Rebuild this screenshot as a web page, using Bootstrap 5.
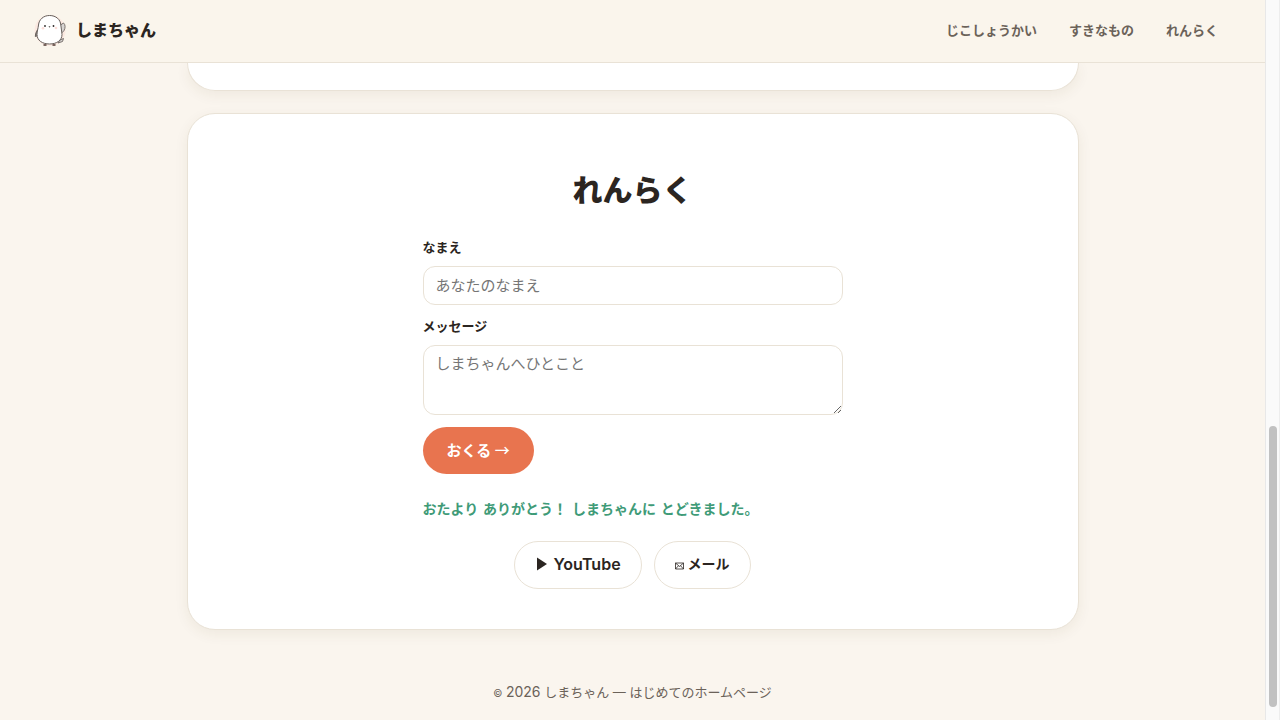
<!DOCTYPE html>
<html lang="ja">
<head>
<meta charset="utf-8">
<meta name="viewport" content="width=device-width, initial-scale=1">
<title>しまちゃん</title>
<link href="https://cdn.jsdelivr.net/npm/bootstrap@5.3.0/dist/css/bootstrap.min.css" rel="stylesheet">
<style>
  :root { --ink: #2b2521; --muted: #6b6259; --line: #e9e2d6; --cream: #faf5ee; }
  body { background: var(--cream); color: var(--ink); font-family: Inter, "Noto Sans CJK JP", sans-serif; font-size: 15px; line-height: 20px; }
  .site-header { background: #faf5ec; border-bottom: 1px solid var(--line); height: 63px; padding: 0 47px 2px 34px; z-index: 5; }
  .brand-link { color: var(--ink); font-size: 16px; font-weight: 800; gap: 10px; }
  .site-menu { gap: 32px; }
  .site-menu a { color: var(--muted); font-size: 13px; font-weight: 700; }
  .panel { width: 100%; max-width: 892px; background: #fff; border: 1px solid var(--line); border-radius: 28px; box-shadow: 0 4px 14px rgba(90, 70, 30, .07); }
  .panel-end { border-top: 0; border-radius: 0 0 28px 28px; height: 28px; }
  .panel-contact { margin-top: 22px; padding: 58px 20px 40px; }
  .panel h2 { font-size: 30px; line-height: 36px; font-weight: 800; margin-bottom: 29px; }
  .contact-form { max-width: 420px; }
  .contact-form label { font-size: 13px; font-weight: 700; margin-bottom: 9px; }
  .contact-form .form-control { border-color: var(--line); border-radius: 12px; padding: 8px 12px; font-size: 15px; line-height: 21px; margin-bottom: 11px; }
  .contact-form textarea.form-control { height: 70px; min-height: 70px; padding-top: 7px; margin-bottom: 12px; }
  .form-control::placeholder { color: #757575; }
  .send-btn { --bs-btn-bg: #e8744f; --bs-btn-color: #fff; --bs-btn-hover-bg: #d9643f; --bs-btn-hover-color: #fff; border: 0; font-size: 15px; font-weight: 700; line-height: 20px; height: 47px; padding: 12px 24px 13px; }
  .thin-arrow { font-weight: 500; font-family: "Noto Sans CJK JP", sans-serif; }
  .thanks { color: #3f9b78; font-family: "DejaVu Sans", "Noto Sans CJK JP", sans-serif; font-size: 14px; font-weight: 700; margin: 25px 0 22px; }
  .link-row { gap: 12px; }
  .pill-link { --bs-btn-color: var(--ink); --bs-btn-border-color: var(--line); --bs-btn-hover-border-color: #d8cdbb; font-size: 16px; font-weight: 600; line-height: 20px; padding: 12px 20px 14px; }
  .pill-mail { font-size: 14px; font-weight: 700; }
  .site-footer { color: var(--muted); font-size: 13px; padding: 52px 16px 18px; }
  .copy-sign { font-size: 10px; }
  .copy-year { font-size: 14px; }
  .scroll-rail { width: 15px; height: 100vh; background: #fafafa; border-left: 1px solid #e8e8e8; border-right: 1px solid #ededed; padding-bottom: 13px; }
  .scroll-thumb { width: 8px; height: 39vh; background: #c1c1c1; border-radius: 4px; }
</style>
</head>
<body class="d-flex">
<div class="flex-grow-1 min-vh-100">
  <header class="site-header sticky-top d-flex align-items-center justify-content-between">
    <a href="#" class="brand-link d-flex align-items-center text-decoration-none">
      <svg width="32" height="32" viewBox="0 0 32 32" aria-hidden="true">
        <circle cx="16" cy="16.500" r="15.500" fill="#fbe9e1"/>
        <path d="M25 12L29.500 9C31.500 10.500 31.500 14 30 16.500C29 18.500 27 19.500 25 18ZM26 26L29.500 24.500L28.500 27.500L24 29Z" fill="#d8d5d3" stroke="#6d6562" stroke-width=".9"/>
        <path d="M5 14C3 16 1.300 19 1.300 22.500C3 22.500 5 20 6 18Z" fill="#8d8784" stroke="#605955" stroke-width=".9"/>
        <path d="M15.500 1.500C9.500 1.500 5 5.500 4.500 11C4.200 14.500 3 17 3 20.500C3 26.500 8.500 30 15.500 30C22.500 30 28 26.500 28 20.500C28 17.500 27 14.500 26.800 11C26.500 5.500 22 1.500 15.500 1.500Z" fill="#fff" stroke="#67605c"/>
        <circle cx="11" cy="12" r=".9" fill="#2d2927"/><circle cx="19.500" cy="12" r=".9" fill="#2d2927"/>
        <path d="M14.500 12.300H16.500L15.500 13.700Z" fill="#504844"/>
        <circle cx="9" cy="14.200" r="1.300" fill="#fbdcd8"/><circle cx="22" cy="14" r="1.300" fill="#fbdcd8"/>
        <path d="M9.500 31H12.500M18.500 31H21.500" stroke="#4f3933" stroke-width="1.500"/>
      </svg>
      <span>しまちゃん</span>
    </a>
    <nav class="site-menu d-flex" aria-label="メニュー">
      <a class="text-decoration-none" href="#about">じこしょうかい</a>
      <a class="text-decoration-none" href="#likes">すきなもの</a>
      <a class="text-decoration-none" href="#contact">れんらく</a>
    </nav>
  </header>

  <main>
    <section class="panel panel-end mx-auto" id="likes"></section>
    <section class="panel panel-contact mx-auto" id="contact">
      <h2 class="text-center">れんらく</h2>
      <form class="contact-form mx-auto">
        <label class="d-block" for="name">なまえ</label>
        <input class="form-control" id="name" type="text" placeholder="あなたのなまえ">
        <label class="d-block" for="message">メッセージ</label>
        <textarea class="form-control" id="message" placeholder="しまちゃんへひとこと"></textarea>
        <button class="btn send-btn rounded-pill d-block" type="button">おくる <span class="thin-arrow">→</span></button>
        <p class="thanks" role="status">おたより ありがとう！ しまちゃんに とどきました。</p>
      </form>
      <div class="link-row d-flex flex-wrap justify-content-center">
        <a class="btn pill-link rounded-pill d-flex align-items-center" href="#youtube">
          <svg class="me-1" width="14" height="14" viewBox="0 0 14 14" aria-hidden="true"><path d="M2 .5V13.500L12 7Z" fill="currentColor"/></svg>
          <span>YouTube</span></a>
        <a class="btn pill-link pill-mail rounded-pill d-flex align-items-center" href="#mail">
          <svg class="me-1 mt-1" width="9" height="8" viewBox="0 0 9 8" fill="none" stroke="currentColor" stroke-width=".8" aria-hidden="true"><path d="M.5 1H8.500V7H.5ZM.5 1L4.500 4.500L8.500 1M.5 7L3.500 3.700M8.500 7L5.500 3.700"/></svg>
          <span>メール</span></a>
      </div>
    </section>
  </main>
  <footer class="site-footer text-center"><span class="copy-sign">©</span> <span class="copy-year">2026</span> しまちゃん — はじめてのホームページ</footer>
</div>
<div class="scroll-rail sticky-top flex-shrink-0 d-flex align-items-end justify-content-center" aria-hidden="true">
  <div class="scroll-thumb"></div>
</div>
<script src="https://cdn.jsdelivr.net/npm/bootstrap@5.3.0/dist/js/bootstrap.bundle.min.js"></script>
</body>
</html>
